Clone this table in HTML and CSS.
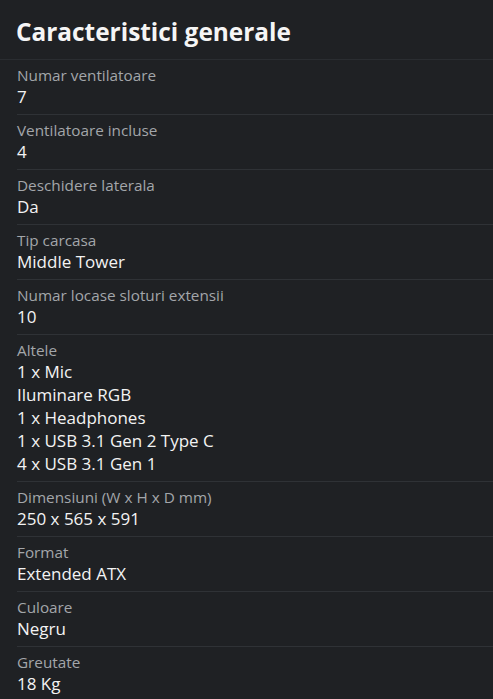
FILE: index.html
```html
<!DOCTYPE html>
<html lang="ro">
<head>
<meta charset="utf-8">
<link rel="stylesheet" href="styles.css">
</head>
<body>
<section class="specs">
  <h2 class="title">Caracteristici generale</h2>
  <div class="list">
    <div class="row"><div class="label">Numar ventilatoare</div><div class="value">7</div></div>
    <div class="row"><div class="label">Ventilatoare incluse</div><div class="value">4</div></div>
    <div class="row"><div class="label">Deschidere laterala</div><div class="value">Da</div></div>
    <div class="row"><div class="label">Tip carcasa</div><div class="value">Middle Tower</div></div>
    <div class="row"><div class="label">Numar locase sloturi extensii</div><div class="value">10</div></div>
    <div class="row"><div class="label">Altele</div><div class="value">1 x Mic<br>Iluminare RGB<br>1 x Headphones<br>1 x USB 3.1 Gen 2 Type C<br>4 x USB 3.1 Gen 1</div></div>
    <div class="row"><div class="label">Dimensiuni (W x H x D mm)</div><div class="value">250 x 565 x 591</div></div>
    <div class="row"><div class="label">Format</div><div class="value">Extended ATX</div></div>
    <div class="row"><div class="label">Culoare</div><div class="value">Negru</div></div>
    <div class="row"><div class="label">Greutate</div><div class="value">18 Kg</div></div>
  </div>
</section>
</body>
</html>
```
FILE: styles.css
```css
html, body {
  margin: 0;
  padding: 0;
  background: #1f2124;
}
body {
  font-family: "Open Sans", "Noto Sans", sans-serif;
  color: #f2f2f2;
}
.specs {
  display: flex;
  flex-direction: column;
}
.title {
  margin: 0;
  height: 60px;
  box-sizing: border-box;
  padding: 3px 17px 0 16px;
  display: flex;
  align-items: center;
  font-size: 24.4px;
  font-weight: 700;
  color: #f5f5f5;
  border-bottom: 1px solid #2a2d31;
}
.list {
  display: flex;
  flex-direction: column;
  padding-left: 17px;
}
.row {
  padding: 5px 0 6px;
  border-bottom: 1px solid #2f3236;
}
.row:last-child {
  border-bottom: none;
}
.label {
  font-size: 15.3px;
  line-height: 20px;
  color: #a3a6aa;
}
.value {
  font-size: 17px;
  font-weight: 500;
  line-height: 23px;
  color: #f3f3f3;
}
```
